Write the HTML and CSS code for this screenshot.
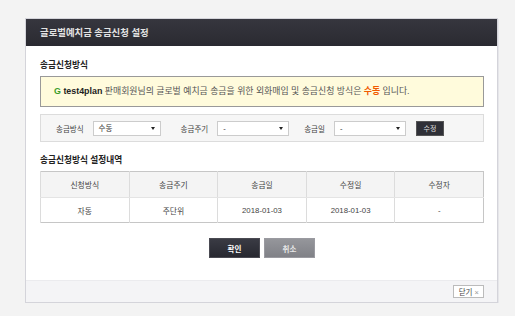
FILE: index.html
```html
<!DOCTYPE html>
<html lang="ko">
<head>
    <meta charset="UTF-8">
    <meta name="viewport" content="width=device-width, initial-scale=1.0">
    <title>글로벌예치금 송금신청 설정</title>
    <link rel="stylesheet" href="styles.css">
</head>
<body>
    <div class="popup">
        <div class="popup-header">글로벌예치금 송금신청 설정</div>

        <div class="popup-body">
            <!-- 송금신청방식 -->
            <div class="section-title">송금신청방식</div>
            <div class="notice">
                <span class="notice-g">G</span> <b>test4plan</b> 판매회원님의 글로벌 예치금 송금을 위한 외화매입 및 송금신청 방식은 <span class="notice-em">수동</span> 입니다.
            </div>

            <div class="filter">
                <span class="filter-label">송금방식</span>
                <div class="select select-method"><span>수동</span><i class="arrow"></i></div>
                <span class="filter-label">송금주기</span>
                <div class="select select-cycle"><span>-</span><i class="arrow"></i></div>
                <span class="filter-label">송금일</span>
                <div class="select select-day"><span>-</span><i class="arrow"></i></div>
                <button class="btn-edit">수정</button>
            </div>

            <!-- 설정내역 -->
            <div class="section-title second">송금신청방식 설정내역</div>
            <table class="history">
                <thead>
                    <tr>
                        <th>신청방식</th>
                        <th>송금주기</th>
                        <th>송금일</th>
                        <th>수정일</th>
                        <th>수정자</th>
                    </tr>
                </thead>
                <tbody>
                    <tr>
                        <td>자동</td>
                        <td>주단위</td>
                        <td>2018-01-03</td>
                        <td>2018-01-03</td>
                        <td>-</td>
                    </tr>
                </tbody>
            </table>

            <div class="actions">
                <button class="btn btn-ok">확인</button>
                <button class="btn btn-cancel">취소</button>
            </div>
        </div>

        <div class="popup-footer">
            <button class="btn-close">닫기 <span class="x">×</span></button>
        </div>
    </div>
</body>
</html>
```

FILE: styles.css
```css
/* Global */
body {
    margin: 0;
    padding: 18px 0 0 25px;
    background-color: #f3f3f3;
    font-family: 'Liberation Sans', 'Noto Sans CJK KR', sans-serif;
    font-size: 8px;
    color: #333;
}

/* Popup */
.popup {
    width: 471px;
    background-color: #fff;
    border: 1px solid #d4d4da;
    box-shadow: 1px 1px 0 #e6e6ea;
}

.popup-header {
    height: 27px;
    line-height: 27px;
    padding-left: 14px;
    background: linear-gradient(#36363e, #2a2a31);
    color: #e2e2e2;
    font-size: 9.4px;
    font-weight: bold;
}

.popup-body {
    padding: 13px 13px 22px 14px;
}

.section-title {
    font-size: 8.7px;
    font-weight: bold;
    line-height: 12px;
    color: #222;
    margin-bottom: 5px;
}

.section-title.second {
    margin-top: 12px;
}

/* Notice */
.notice {
    height: 29px;
    line-height: 29px;
    padding-left: 13px;
    background-color: #fffbdc;
    border: 1px solid #999;
    color: #555;
    font-size: 8.9px;
}

.notice b {
    color: #222;
}

.notice-g {
    color: #3a9b2c;
    font-weight: bold;
}

.notice-em {
    color: #f05a00;
    font-weight: bold;
}

/* Filter */
.filter {
    margin-top: 7px;
    height: 26px;
    display: flex;
    align-items: center;
    padding-left: 15px;
    background-color: #f6f6f6;
    border: 1px solid #dcdcdc;
    font-size: 7.5px;
}

.filter-label {
    color: #444;
    margin-right: 9px;
}

.select {
    position: relative;
    height: 13px;
    line-height: 13px;
    padding-left: 5px;
    background-color: #fff;
    border: 1px solid #ccc;
    color: #333;
}

.select .arrow {
    position: absolute;
    right: 5px;
    top: 5px;
    border-left: 2.5px solid transparent;
    border-right: 2.5px solid transparent;
    border-top: 3px solid #222;
}

.select-method { width: 61px; margin-right: 20px; }
.select-cycle { width: 65px; margin-right: 15px; }
.select-day { width: 65px; margin-right: 10px; }

.btn-edit {
    width: 28px;
    height: 15px;
    padding: 0;
    background-color: #2f3037;
    border: 1px solid #555;
    color: #ddd;
    font-family: inherit;
    font-size: 7px;
}

/* History table */
.history {
    width: 100%;
    border-collapse: collapse;
    border: 1px solid #c6c6c6;
    table-layout: fixed;
    font-size: 7.8px;
}

.history th {
    height: 23px;
    background-color: #f4f4f4;
    border-left: 1px solid #dcdcdc;
    border-bottom: 1px solid #e4e4e4;
    font-weight: normal;
    color: #444;
}

.history td {
    height: 22px;
    text-align: center;
    border-left: 1px solid #dcdcdc;
    color: #444;
}

/* Buttons */
.actions {
    margin-top: 15px;
    display: flex;
    justify-content: center;
    gap: 4px;
}

.btn {
    width: 51px;
    height: 20px;
    padding: 0;
    font-family: inherit;
    font-size: 7.5px;
    font-weight: bold;
    border: 1px solid #555;
}

.btn-ok {
    background: linear-gradient(#3a3b44, #272830);
    color: #fff;
    border-color: #4a4a52;
}

.btn-cancel {
    background: linear-gradient(#95969b, #808187);
    color: #e6e6e6;
    border-color: #9a9aa0;
}

/* Footer */
.popup-footer {
    height: 21px;
    display: flex;
    justify-content: flex-end;
    align-items: center;
    padding-right: 13px;
    background-color: #f4f4f6;
    border-top: 1px solid #ebebee;
}

.btn-close {
    height: 13px;
    padding: 0 4px 0 5px;
    background-color: #fff;
    border: 1px solid #bbb;
    font-family: inherit;
    font-size: 7.5px;
    color: #444;
}

.btn-close .x {
    color: #999;
}
```
